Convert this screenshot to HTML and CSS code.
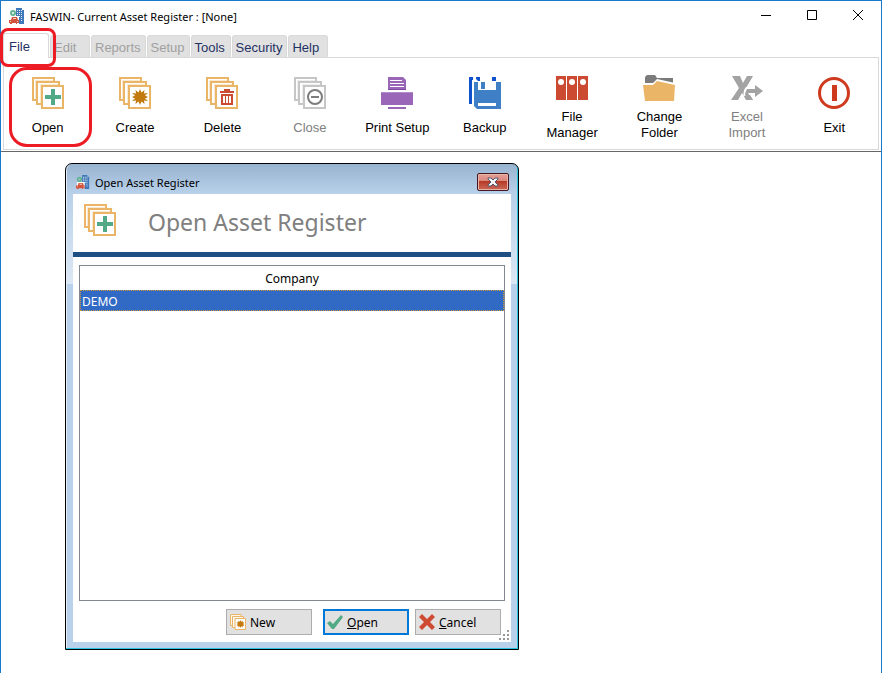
FILE: index.html
```html
<!DOCTYPE html>
<html lang="en">
<head>
<meta charset="utf-8">
<title>FASWIN- Current Asset Register : [None]</title>
<link rel="stylesheet" href="styles.css">
</head>
<body>
<svg class="defs" aria-hidden="true">
  <symbol id="app" viewBox="0 0 16 16">
    <path fill="#3f78b8" d="M7 0h6v2h2v14h-5v-5H7z"/>
    <path fill="#e6f0fa" d="M8 2h1v1H8zM10 2h1v1h-1zM12 2h1v1h-1zM8 4h1v1H8zM10 4h1v1h-1zM12 4h1v1h-1zM8 6h1v1H8zM10 6h1v1h-1zM12 6h1v1h-1zM10 8h1v1h-1zM12 8h1v1h-1zM12 10h1v1h-1zM12 12h1v1h-1z"/>
    <circle cx="4" cy="5" r="2" fill="none" stroke="#63b292" stroke-width="2"/>
    <path fill="#fff" d="M1 8h9v7H1z"/>
    <path fill="#d2533c" d="M3 9h5l1 3h1v3H8v1H7v-1H3v1H1v-1H0v-3h2z"/>
    <path fill="#f2d2c8" d="M4 10h3v1H4zM1 13h1v1H1zM8 13h1v1H8z"/>
  </symbol>
  <symbol id="stack" viewBox="0 0 32 32">
    <g fill="#fff" stroke="currentColor" stroke-width="2">
      <path d="M1 1h21v22H1z"/><path d="M5 5h22v22H5z"/><path d="M10 9h21v22H10z"/>
    </g>
    <path fill="none" stroke="currentColor" stroke-opacity=".3" d="M3.500 22V3.500H21M8.500 26V7.500H26"/>
  </symbol>
  <symbol id="star" viewBox="0 0 32 32">
    <path fill="#c27a0e" d="M21 12l1.500 3.500 3-2.500-.5 3.500 4-.5-3 2.500 3 1.500-3 1.500 3 2.500-4-.5.5 3.500-3-2.500L21 28l-1.500-3.500-3 2.500.5-3.500-4 .5 3-2.500-3-1.500 3-1.500-3-2.500 4 .5-.5-3.500 3 2.500z"/>
  </symbol>
</svg>

<div class="window">
  <header class="titlebar">
    <svg class="app-icon" aria-hidden="true"><use href="#app"/></svg>
    <h1>FASWIN- Current Asset Register : [None]</h1>
    <div class="controls">
      <button aria-label="Minimize"><svg viewBox="0 0 12 12"><path d="M1 5.500h10"/></svg></button>
      <button aria-label="Maximize"><svg viewBox="0 0 12 12"><path d="M1.500 .5h9v9h-9z"/></svg></button>
      <button aria-label="Close window"><svg viewBox="0 0 12 12"><path d="M1 0l10 10M11 0L1 10"/></svg></button>
    </div>
  </header>

  <nav class="tabs">
    <button class="tab active">File</button>
    <button class="tab" disabled>Edit</button>
    <button class="tab" disabled>Reports</button>
    <button class="tab" disabled>Setup</button>
    <button class="tab">Tools</button>
    <button class="tab">Security</button>
    <button class="tab">Help</button>
  </nav>

  <div class="ribbon">
    <button class="tool">
      <svg viewBox="0 0 32 32"><use href="#stack"/><path fill="#52a986" d="M19 12h4v6h6v4h-6v6h-4v-6h-6v-4h6z"/></svg>
      <span>Open</span></button>
    <button class="tool">
      <svg viewBox="0 0 32 32"><use href="#stack"/><use href="#star"/></svg>
      <span>Create</span></button>
    <button class="tool">
      <svg viewBox="0 0 32 32"><use href="#stack"/><g fill="#cc4a31"><path d="M18 12h6v2h4v2H14v-2h4z"/><path fill-rule="evenodd" d="M15 17h12v11H15zM17 19v7h2v-7zM20 19v7h2v-7zM23 19v7h2v-7z"/></g></svg>
      <span>Delete</span></button>
    <button class="tool" disabled>
      <svg class="gray" viewBox="0 0 32 32"><use href="#stack"/><circle cx="21" cy="20" r="7" fill="none" stroke="#7d7d7d" stroke-width="2"/><path fill="#7d7d7d" d="M17 19h8v2h-8z"/></svg>
      <span>Close</span></button>
    <button class="tool">
      <svg viewBox="0 0 32 32"><g fill="#9966b8"><path d="M7 0h15l3 3v10H7z"/><path d="M0 15h32v13H0z"/><path d="M7 30h18v2H7z"/></g><path fill="#fff" d="M9 3h12v1H9zM9 6h14v1H9zM9 9h14v1H9z"/><path fill="#7f4aa6" d="M7 12h18v1H7z"/><path fill="#b28bca" d="M0 15h32v1H0z"/></svg>
      <span>Print Setup</span></button>
    <button class="tool">
      <svg viewBox="0 0 32 32"><path fill="#0f52cb" d="M0 0h4v3H3v24H0zM7 0h4v4H9L7 2zM23 0h4v4h-4z"/><path fill="#3f7fc6" fill-rule="evenodd" d="M5 5h4v8h18V5h5v27H8l-3-3zM9 26v3h18v-3z"/><path fill="#3f7fc6" d="M12 5h4v7h-4z"/></svg>
      <span>Backup</span></button>
    <button class="tool tall">
      <svg viewBox="0 0 32 32"><path fill="#cc4a31" d="M0 4h10v24H0zM11 4h10v24H11zM22 4h10v24H22z"/><g fill="#fff"><circle cx="5" cy="10" r="3"/><circle cx="16" cy="10" r="3"/><circle cx="27" cy="10" r="3"/></g></svg>
      <span>File<br>Manager</span></button>
    <button class="tool tall">
      <svg viewBox="0 0 32 32"><path fill="#7b7b7b" d="M4 3h8l2 3h16v5H2V5z"/><path fill="#fff" d="M0 12h9l5-5 18 4v3H0z"/><path fill="#eab566" d="M0 13h10l4-4 18 4-1 16H2z"/></svg>
      <span>Change<br>Folder</span></button>
    <button class="tool tall" disabled>
      <svg viewBox="0 0 32 32"><path fill="#a3a3a3" d="M1 4h8l3 7 4-7h6l-7 12 7 12h-7l-4-7-4 7H0l8-12z"/><path fill="#fff" d="M13 18l2-3h8v-4h3l8 7-8 9h-3v-4h-5l2 4-5-4-3 2z"/><path fill="#a3a3a3" d="M15 19l1-2h8v-4l8 6-8 6v-4h-7l5 7h-5l-3-6z"/></svg>
      <span>Excel<br>Import</span></button>
    <button class="tool">
      <svg viewBox="0 0 32 32"><circle cx="16" cy="16" r="14.500" fill="none" stroke="#cf3a1f" stroke-width="3"/><path fill="#cf3a1f" d="M14 8h5v16h-5z"/></svg>
      <span>Exit</span></button>
  </div>

  <main class="workspace">
    <section class="dialog" aria-labelledby="dialog-title">
      <header class="dialog-bar">
        <svg class="app-icon" aria-hidden="true"><use href="#app"/></svg>
        <h2 id="dialog-title">Open Asset Register</h2>
        <button class="dialog-close" aria-label="Close dialog"><svg viewBox="0 0 12 10"><path fill="#f4f4f4" stroke="#54566b" d="M1 1h3l2 2 2-2h3v1L8 5l3 3v1H8L6 7 4 9H1V8l3-3-3-3z"/></svg></button>
      </header>
      <div class="dialog-body">
        <div class="banner">
          <svg viewBox="0 0 32 32"><use href="#stack"/><path fill="#52a986" d="M19 12h4v6h6v4h-6v6h-4v-6h-6v-4h6z"/></svg>
          <p>Open Asset Register</p>
        </div>
        <div class="list">
          <table>
            <thead><tr><th>Company</th></tr></thead>
            <tbody><tr class="selected"><td>DEMO</td></tr></tbody>
          </table>
        </div>
        <footer class="actions">
          <button class="action new"><svg viewBox="0 0 32 32"><use href="#stack"/><use href="#star"/></svg>New</button>
          <button class="action primary"><svg viewBox="0 0 16 16"><path fill="#52a986" d="M0 9l3-2 3 3 8-9 2 2L7 15H5z"/></svg><span><u>O</u>pen</span></button>
          <button class="action"><svg viewBox="0 0 16 16"><path fill="#cf4a33" d="M3 0l5 5 5-5 3 3-5 5 5 5-3 3-5-5-5 5-3-3 5-5-5-5z"/></svg><span><u>C</u>ancel</span></button>
        </footer>
        <svg class="grip" viewBox="0 0 10 10" aria-hidden="true"><path fill="#999" d="M8 0h2v2H8zM4 4h2v2H4zM8 4h2v2H8zM0 8h2v2H0zM4 8h2v2H4zM8 8h2v2H8z"/></svg>
      </div>
    </section>
  </main>
  <div class="mark mark-file"></div>
  <div class="mark mark-open"></div>
</div>
</body>
</html>
```

FILE: styles.css
```css
* { box-sizing: border-box; }

body {
  margin: 0;
  background: #fff;
  color: #000;
  font-family: "Noto Sans", "Open Sans", sans-serif;
  font-size: 12px;
}

h1, h2, p { margin: 0; font-weight: 400; }

button {
  margin: 0;
  padding: 0;
  border: 0;
  background: none;
  color: inherit;
  font: inherit;
}

svg { display: block; flex: none; }

.defs { position: absolute; width: 0; height: 0; }

.window {
  position: relative;
  display: flex;
  flex-direction: column;
  min-height: 100vh;
  border: 1px solid #1979ca;
  border-bottom: 0;
}

.titlebar {
  display: flex;
  align-items: center;
  height: 30px;
  padding-left: 8px;
}

.app-icon { width: 16px; height: 16px; }

.titlebar h1 { margin-left: 5px; font-size: 11px; }

.controls { display: flex; margin-left: auto; }

.controls button {
  display: grid;
  place-items: center;
  width: 46px;
  height: 28px;
}

.controls svg {
  width: 12px;
  height: 12px;
  fill: none;
  stroke: #000;
}

.tabs {
  display: flex;
  align-items: flex-end;
  gap: 1px;
  height: 26px;
  padding-left: 2px;
  font-family: "Liberation Sans", Arial, sans-serif;
  font-size: 13px;
}

.tab {
  min-width: 40px;
  height: 22px;
  padding: 1px 4px 0 3px;
  border: 1px solid #d9d9d9;
  border-bottom: 0;
  border-radius: 3px 3px 0 0;
  background: #e1e1e1;
  color: #1f3263;
  text-align: left;
}

.tab:disabled { color: #a0a0a0; }

.tab.active {
  position: relative;
  width: 46px;
  height: 25px;
  margin-bottom: -1px;
  padding: 0 5px;
  background: #fff;
}

.ribbon {
  display: grid;
  grid-template-columns: repeat(10, 1fr);
  min-height: 93px;
  margin: 0 2px;
  border: 1px solid #d9d9d9;
  font-family: "Liberation Sans", Arial, sans-serif;
  font-size: 13px;
  line-height: 16px;
}

.tool {
  display: flex;
  flex-direction: column;
  align-items: center;
  justify-content: center;
  gap: 11px;
  padding-top: 6px;
}

.tool.tall { gap: 5px; padding-top: 5px; }
.tool svg { width: 32px; height: 32px; color: #eab566; }
.tool .gray { color: #c6c6c6; }
.tool:disabled { color: #808080; }

.workspace {
  flex: 1;
  margin-top: 1px;
  padding: 11px 64px 23px;
  border-top: 1px solid #666;
}

.dialog {
  max-width: 454px;
  padding: 0 7px 7px;
  border: 1px solid #000;
  border-radius: 7px 7px 0 0;
  background:
    linear-gradient(#98b3d0, #b9d1ea) 0 0 / 100% 30px no-repeat,
    linear-gradient(#b9d1ea, #dce8f5) 0 30px / 100% 90px no-repeat,
    #b9d1ea;
  box-shadow: inset -1px -1px #2cc3df, inset 1px 0 #e4edf7;
}

.dialog-bar {
  display: flex;
  align-items: center;
  height: 30px;
  padding: 6px 2px 0 3px;
}

.dialog-bar .app-icon { width: 14px; height: 14px; }
.dialog-bar h2 { margin-left: 5px; font-size: 11px; }

.dialog-close {
  display: grid;
  place-items: center;
  width: 32px;
  height: 18px;
  margin-left: auto;
  border: 1px solid #471722;
  border-radius: 2px;
  background: linear-gradient(#e5a49a, #d98479 45%, #b53a25 46%, #cb6a58);
  box-shadow: inset 0 0 0 1px #e8b4aa;
}

.dialog-close svg { width: 12px; height: 10px; }

.dialog-body { position: relative; padding-bottom: 7px; background: #fff; }

.banner {
  display: flex;
  align-items: center;
  gap: 32px;
  height: 63px;
  padding: 0 11px 6px;
  border-bottom: 5px solid #1d4f84;
}

.banner svg { width: 32px; height: 32px; color: #eab566; }
.banner p { padding-top: 4px; color: #808080; font-size: 23px; line-height: 32px; }

.list {
  height: 336px;
  margin: 8px 6px 0;
  border: 1px solid #828790;
}

.list table { width: 100%; border-collapse: collapse; }
.list th { height: 24px; padding: 2px 0 0; font-weight: 400; line-height: 20px; }
.list td { height: 21px; padding: 2px 2px 0; line-height: 18px; }

.selected {
  outline: 1px dotted #d09a3a;
  outline-offset: -1px;
  background: #316ac5;
  color: #fff;
}

.actions {
  display: flex;
  justify-content: flex-end;
  gap: 6px;
  padding: 8px 10px 0;
}

.action {
  display: flex;
  align-items: center;
  gap: 4px;
  width: 86px;
  height: 26px;
  padding-left: 3px;
  border: 1px solid #adadad;
  background: #e1e1e1;
}

.action svg { width: 16px; height: 16px; color: #eab566; }
.action.new { margin-right: 5px; }
.action.primary { border: 2px solid #0078d7; padding-left: 2px; }

.grip { position: absolute; right: 2px; bottom: 2px; width: 10px; height: 10px; }

.mark {
  position: absolute;
  border: 3px solid #ed1c24;
  pointer-events: none;
}

.mark-file { left: -1px; top: 27px; width: 56px; height: 39px; border-radius: 8px; }
.mark-open { left: 8px; top: 66px; width: 83px; height: 80px; border-radius: 18px; }
```
